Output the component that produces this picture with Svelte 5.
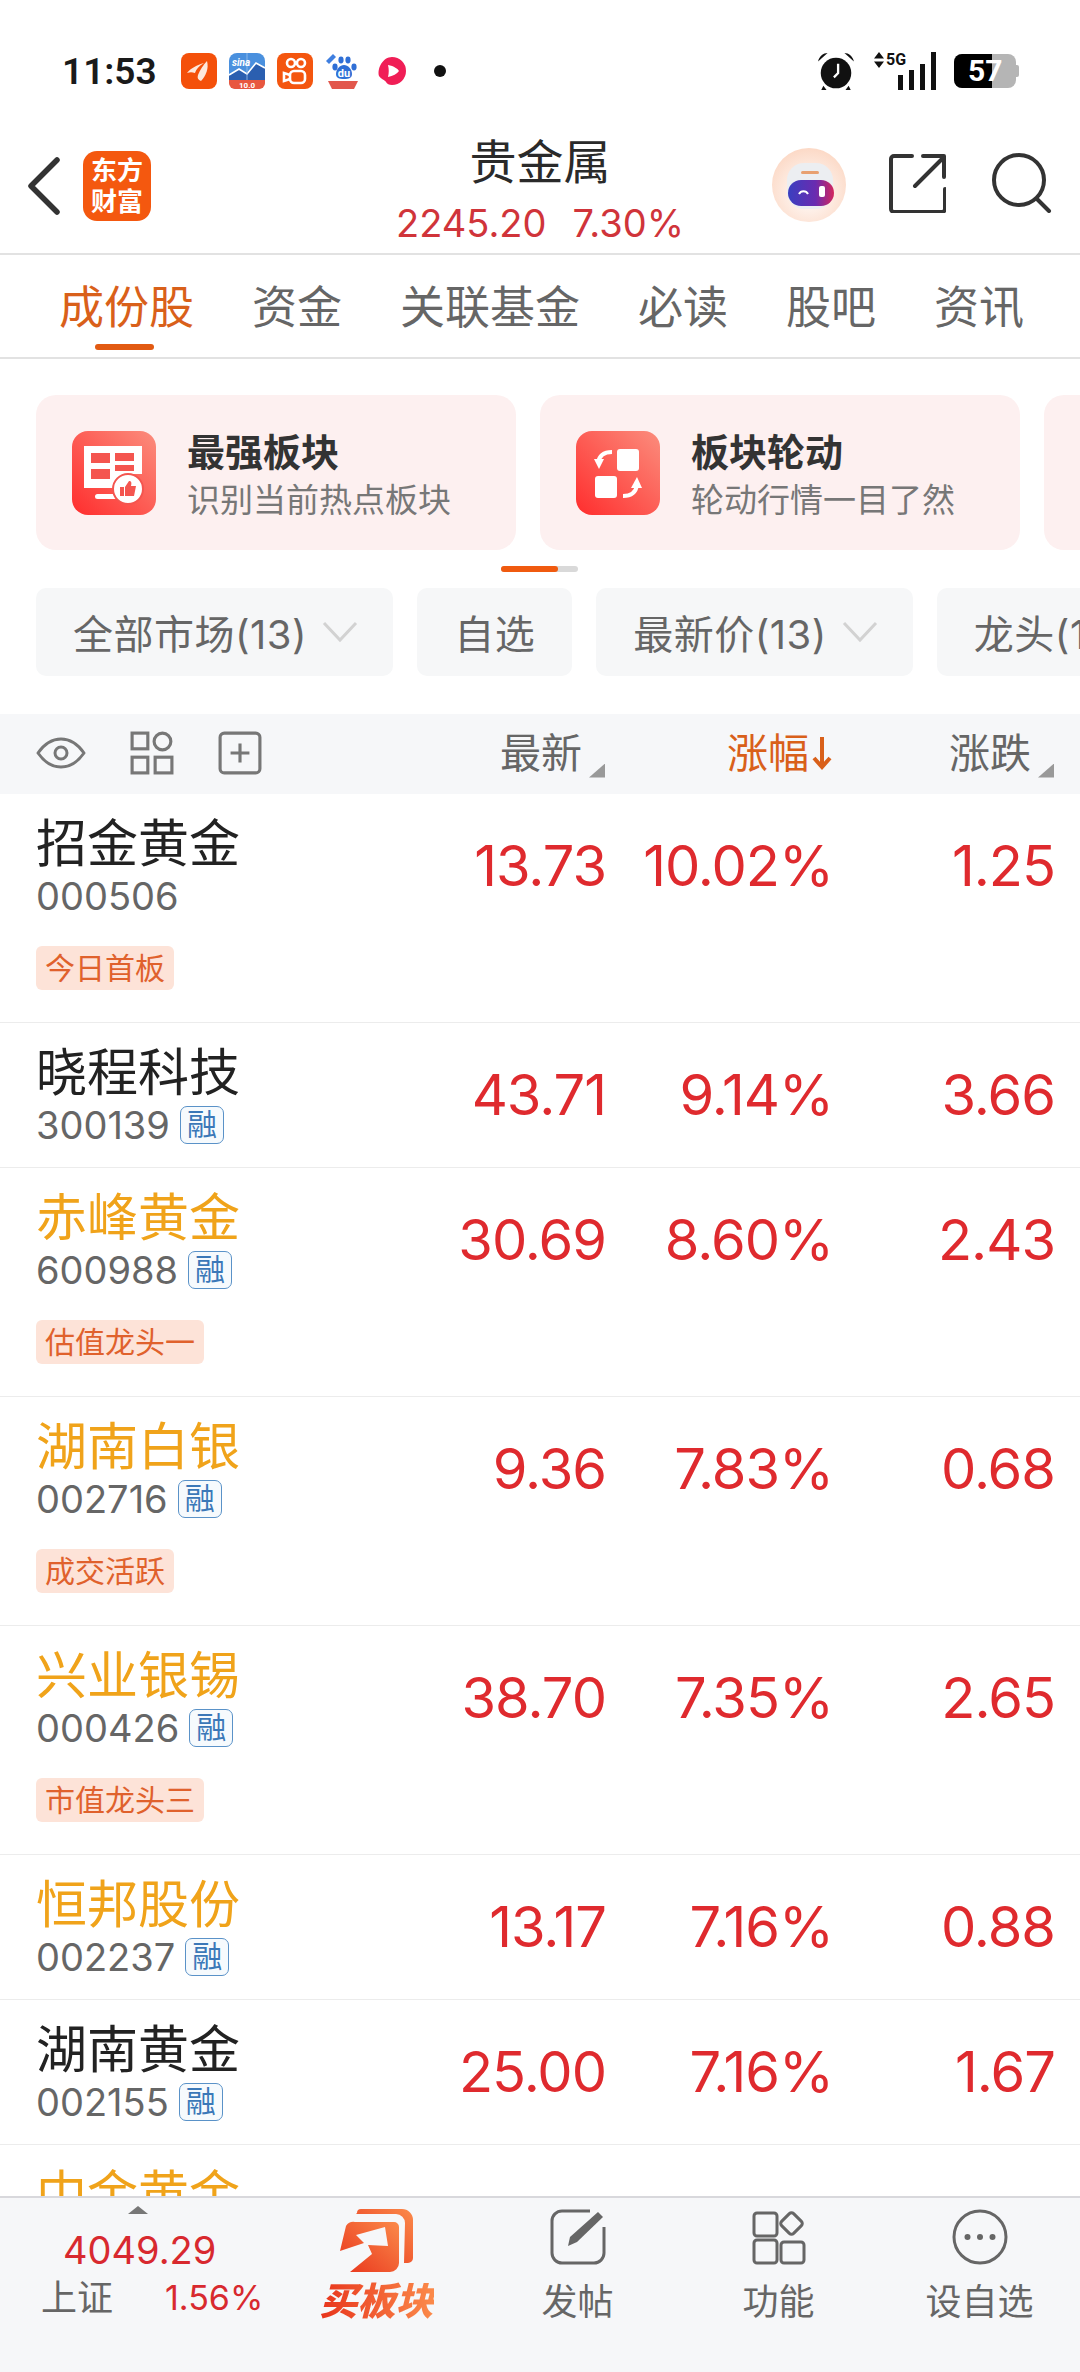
<script>
  const tabs = ['成份股', '资金', '关联基金', '必读', '股吧', '资讯'];
  const rows = [
    { name: '招金黄金', code: '000506', price: '13.73', pct: '10.02%', chg: '1.25', tag: '今日首板' },
    { name: '晓程科技', code: '300139', price: '43.71', pct: '9.14%', chg: '3.66', rong: true },
    { name: '赤峰黄金', code: '600988', price: '30.69', pct: '8.60%', chg: '2.43', rong: true, gold: true, tag: '估值龙头一' },
    { name: '湖南白银', code: '002716', price: '9.36', pct: '7.83%', chg: '0.68', rong: true, gold: true, tag: '成交活跃' },
    { name: '兴业银锡', code: '000426', price: '38.70', pct: '7.35%', chg: '2.65', rong: true, gold: true, tag: '市值龙头三' },
    { name: '恒邦股份', code: '002237', price: '13.17', pct: '7.16%', chg: '0.88', rong: true, gold: true },
    { name: '湖南黄金', code: '002155', price: '25.00', pct: '7.16%', chg: '1.67', rong: true },
    { name: '中金黄金', code: '600489', price: '', pct: '', chg: '', rong: true, gold: true }
  ];
</script>

<div class="screen">
  <div class="status">
    <span class="time">11:53</span>
    <div class="notes">
      <svg width="36" height="36" viewBox="0 0 36 36"><rect width="36" height="36" rx="8" fill="#f4500a"/><path d="M6 20c4-5 10-8 17-10-5 3-8 6-9 10-3-1-5-1-8 0z" fill="#fde8dc"/><path d="M26 8c2 7-1 15-6 20-3-1-4-3-3-6 2-5 5-10 9-14z" fill="#fde8dc"/></svg>
      <svg width="36" height="36" viewBox="0 0 36 36"><rect width="36" height="36" rx="8" fill="#4a90de"/><path d="M0 22l10-6 8 5 9-11 9 5v13H0z" fill="#2b5fb0"/><path d="M0 22l10-6 8 5 9-11 9 5" fill="none" stroke="#fff" stroke-width="1.600"/><path d="M18 0v28" stroke="#9cc2ee" stroke-width=".8"/><path d="M0 27h36v3a6 6 0 0 1-6 6H6a6 6 0 0 1-6-6z" fill="#e8573f"/><text x="3" y="13" class="mini it">sina</text><text x="18" y="35" class="mini ctr">10.0</text></svg>
      <svg width="36" height="36" viewBox="0 0 36 36"><rect width="36" height="36" rx="8" fill="#f4560f"/><g fill="none" stroke="#fff" stroke-width="2.600"><circle cx="14" cy="10" r="4"/><circle cx="24" cy="10" r="4"/><rect x="13" y="18" width="15" height="12" rx="4"/><path d="M13 22l-6-2v8l6-2"/></g></svg>
      <svg width="36" height="36" viewBox="0 0 36 36"><g fill="#2f6fd6"><ellipse cx="10" cy="14" rx="2.600" ry="3.400"/><ellipse cx="16" cy="7" rx="2.600" ry="3.400"/><ellipse cx="23" cy="7" rx="2.600" ry="3.400"/><ellipse cx="29" cy="14" rx="2.600" ry="3.400"/><path d="M19 12c4 0 8 4 8 9 0 4-3 5-8 5s-8-1-8-5c0-5 4-9 8-9z"/></g><text x="19" y="24" class="mini ctr du">du</text><path d="M3 28h30l-4 8H7z" fill="#e2574c"/><path d="M1 8l7-7 3 3-7 7z" fill="#3f7fe0"/></svg>
      <svg class="hs" width="30" height="30" viewBox="0 0 30 30"><path d="M15 1a14 14 0 1 1 0 28c-3 0-5-1-6-3-1-2-5-3-7-6C0 12 6 1 15 1z" fill="#f01e56"/><path d="M11 9c6 1 10 4 11 6-2 3-6 5-11 6 1-4 1-8 0-12z" fill="#fff"/></svg>
      <span class="dot"></span>
    </div>
    <div class="sys">
      <svg width="40" height="40" viewBox="0 0 38 38"><circle cx="19" cy="21" r="14.500" fill="#111"/><path d="M2 10c1-5 5-8 9-8z M36 10c-1-5-5-8-9-8z" fill="#111"/><path d="M7 33l-2 4h5z M31 33l2 4h-5z" fill="#111"/><path d="M21 12v9l-4 4" fill="none" stroke="#fff" stroke-width="2.200"/></svg>
      <div class="net">
        <svg class="updown" width="10" height="16" viewBox="0 0 10 16"><path d="M5 0l5 6.500H0zM5 16L0 9.500h10z" fill="#111"/></svg>
        <span class="fiveg">5G</span>
        <svg width="38" height="38" viewBox="0 0 38 38"><g fill="#111"><rect x="0" y="23" width="5" height="15"/><rect x="11" y="18" width="5" height="20"/><rect x="22" y="12" width="5" height="26"/><rect x="33" y="0" width="5" height="38"/></g></svg>
      </div>
      <div class="batt"><span class="fill"></span><span class="level">57</span><span class="cap"></span></div>
    </div>
  </div>

  <header class="head">
    <svg class="back" width="34" height="58" viewBox="0 0 34 58"><path d="M30 3L4 29l26 26" fill="none" stroke="#333" stroke-width="5.500" stroke-linecap="round" stroke-linejoin="round"/></svg>
    <div class="logo"><span>东方</span><span>财富</span></div>
    <div class="title">
      <div class="t1">贵金属</div>
      <div class="t2"><span>2245.20</span><span>7.30%</span></div>
    </div>
    <svg class="robot" width="74" height="74" viewBox="0 0 74 74">
      <defs>
        <radialGradient id="rb" cx="50%" cy="60%" r="60%"><stop offset="0" stop-color="#fff"/><stop offset="1" stop-color="#fcd9c6"/></radialGradient>
        <linearGradient id="vs" x1="0" x2="1"><stop offset="0" stop-color="#3a3fc0"/><stop offset=".6" stop-color="#6a2bb0"/><stop offset="1" stop-color="#d3265c"/></linearGradient>
      </defs>
      <circle cx="37" cy="37" r="37" fill="url(#rb)"/>
      <rect x="15" y="15" width="46" height="46" rx="17" fill="#eceef1"/>
      <rect x="29" y="23" width="18" height="3" rx="1.500" fill="#e8a070"/>
      <rect x="16" y="32" width="46" height="26" rx="13" fill="url(#vs)"/>
      <path d="M27 46a5 5 0 0 1 9 0" fill="none" stroke="#fff" stroke-width="2"/>
      <rect x="47" y="38" width="6" height="11" rx="2" fill="#fff"/>
    </svg>
    <svg class="share" width="58" height="60" viewBox="0 0 58 60"><path d="M24 3H6a3 3 0 0 0-3 3v50a3 3 0 0 0 3 3h48a3 3 0 0 0 3-3V36M27 33L56 4M35 3h21v21" fill="none" stroke="#333" stroke-width="4" stroke-linecap="round" stroke-linejoin="round"/></svg>
    <svg class="search" width="60" height="60" viewBox="0 0 60 60"><circle cx="27" cy="27" r="25" fill="none" stroke="#333" stroke-width="4"/><path d="M45 46l12 12" stroke="#333" stroke-width="4" stroke-linecap="round"/></svg>
  </header>

  <nav class="tabs">
    {#each tabs as t, i}
      <div class="tab" class:on={i === 0}>{t}{#if i === 0}<span class="bar"></span>{/if}</div>
    {/each}
  </nav>

  <div class="cards">
    <div class="card">
      <svg width="84" height="84" viewBox="0 0 84 84">
        <defs><linearGradient id="ci" x1="0" y1="1" x2="1" y2="0"><stop offset="0" stop-color="#ff2d2d"/><stop offset="1" stop-color="#fb8d7d"/></linearGradient></defs>
        <rect width="84" height="84" rx="16" fill="url(#ci)"/>
        <path d="M12 15h58v28H53v14H12z" fill="#fff"/>
        <rect x="19" y="22" width="19" height="10" fill="#f4554f"/><rect x="19" y="38" width="19" height="10" fill="#f4554f"/><rect x="43" y="22" width="19" height="8" fill="#f4554f"/><rect x="43" y="34" width="19" height="6" fill="#f4554f"/>
        <rect x="23" y="63" width="22" height="5" rx="2.500" fill="#fff"/>
        <circle cx="56" cy="58" r="15" fill="#fff" stroke="#f4554f" stroke-width="2"/>
        <path d="M48 56h4v9h-4zM53 56l4-6c2 0 3 1 2 5h5l-2 10h-9z" fill="#f4554f"/>
      </svg>
      <div class="ctext"><div class="ct">最强板块</div><div class="cs">识别当前热点板块</div></div>
    </div>
    <div class="card">
      <svg width="84" height="84" viewBox="0 0 84 84">
        <rect width="84" height="84" rx="16" fill="url(#ci)"/>
        <rect x="41" y="18" width="22" height="22" rx="3" fill="#fff"/>
        <rect x="19" y="45" width="22" height="22" rx="3" fill="#fff"/>
        <path d="M36 21c-8 0-13 4-14 11" fill="none" stroke="#fff" stroke-width="4"/><path d="M18 28h10l-5 10z" fill="#fff"/>
        <path d="M47 65c8 0 13-4 14-11" fill="none" stroke="#fff" stroke-width="4"/><path d="M66 57H55l6-11z" fill="#fff"/>
      </svg>
      <div class="ctext"><div class="ct">板块轮动</div><div class="cs">轮动行情一目了然</div></div>
    </div>
    <div class="card"></div>
  </div>

  <div class="indicator"><span></span></div>

  <div class="pills">
    <div class="pill">全部市场(13)<svg width="36" height="22" viewBox="0 0 36 22"><path d="M2 2l16 17L34 2" fill="none" stroke="#d2d2d2" stroke-width="3"/></svg></div>
    <div class="pill">自选</div>
    <div class="pill">最新价(13)<svg width="36" height="22" viewBox="0 0 36 22"><path d="M2 2l16 17L34 2" fill="none" stroke="#d2d2d2" stroke-width="3"/></svg></div>
    <div class="pill">龙头(13)</div>
  </div>

  <div class="thead">
    <div class="ticons">
      <svg width="50" height="32" viewBox="0 0 50 32"><path d="M2 16C9 6 16 2 25 2s16 4 23 14c-7 10-14 14-23 14S9 26 2 16z" fill="none" stroke="#777" stroke-width="3" stroke-linejoin="round"/><circle cx="25" cy="16" r="6" fill="none" stroke="#777" stroke-width="3"/></svg>
      <svg width="44" height="44" viewBox="0 0 42 42"><g fill="none" stroke="#777" stroke-width="3"><rect x="2" y="2" width="15" height="15"/><circle cx="31" cy="10" r="8"/><rect x="2" y="25" width="15" height="15"/><rect x="24" y="25" width="16" height="15"/></g></svg>
      <svg width="44" height="44" viewBox="0 0 42 42"><rect x="2" y="2" width="38" height="38" rx="4" fill="none" stroke="#777" stroke-width="3"/><path d="M21 12v18M12 21h18" stroke="#777" stroke-width="3"/></svg>
    </div>
    <div class="th">最新<i class="tri"></i></div>
    <div class="th act">涨幅<svg width="20" height="34" viewBox="0 0 20 34"><path d="M10 1v30M2 22l8 9 8-9" fill="none" stroke="#d9601a" stroke-width="4"/></svg></div>
    <div class="th">涨跌<i class="tri"></i></div>
  </div>

  <main class="list">
    {#each rows as r}
      <div class="row">
        <div class="main">
          <div class="info">
            <div class="name" class:gold={r.gold}>{r.name}</div>
            <div class="code">{r.code}{#if r.rong}<span class="rong">融</span>{/if}</div>
          </div>
          <div class="num">{r.price}</div>
          <div class="num pct">{r.pct}</div>
          <div class="num">{r.chg}</div>
        </div>
        {#if r.tag}<div class="tagline"><span class="tag">{r.tag}</span></div>{/if}
      </div>
    {/each}
  </main>

  <footer class="foot">
    <div class="index">
      <i class="up"></i>
      <div class="ival">4049.29</div>
      <div class="irow"><span class="iname">上证</span><span class="ipct">1.56%</span></div>
    </div>
    <div class="ft buycell">
      <svg width="74" height="64" viewBox="0 0 74 64">
        <defs>
          <linearGradient id="bg1" x1="0" y1="1" x2="1" y2="0"><stop offset="0" stop-color="#e8341c"/><stop offset="1" stop-color="#fb8a4a"/></linearGradient>
        </defs>
        <path d="M17 4a4 4 0 0 1 4-4h41a11 11 0 0 1 11 11v38a5 5 0 0 1-5 5h-4l1-40a9 9 0 0 0-9-9H16z" fill="url(#bg1)"/>
        <path d="M6 17a9 9 0 0 1 9-4h39a5 5 0 0 1 5 5v36a9 9 0 0 1-9 9H10l22-18-4-9 20 1-3-19-29 8 8 8-24 8z" fill="url(#bg1)"/>
      </svg>
      <span class="buy">买板块</span>
    </div>
    <div class="ft">
      <svg width="56" height="56" viewBox="0 0 56 56"><path d="M40 2H12A10 10 0 0 0 2 12v32a10 10 0 0 0 10 10h32a10 10 0 0 0 10-10V18" fill="none" stroke="#666" stroke-width="3"/><path d="M18 37l2-9L48 3l5 5-26 25z" fill="#666"/></svg>
      <span class="fl">发帖</span>
    </div>
    <div class="ft">
      <svg width="54" height="56" viewBox="0 0 54 56"><g fill="none" stroke="#666" stroke-width="3"><rect x="2" y="4" width="23" height="23" rx="3"/><rect x="29" y="33" width="23" height="21" rx="3"/><rect x="2" y="31" width="23" height="23" rx="3"/><rect x="31" y="6" width="17" height="17" rx="3" transform="rotate(45 39.500 14.500)"/></g></svg>
      <span class="fl">功能</span>
    </div>
    <div class="ft">
      <svg width="56" height="56" viewBox="0 0 56 56"><circle cx="28" cy="28" r="26" fill="none" stroke="#666" stroke-width="3"/><g fill="#666"><circle cx="15.500" cy="28" r="3"/><circle cx="28" cy="28" r="3"/><circle cx="40.500" cy="28" r="3"/></g></svg>
      <span class="fl">设自选</span>
    </div>
  </footer>
</div>

<style>
  :global(body) { margin: 0; background: #fff; }
  .screen {
    width: 1080px; height: 2372px; display: flex; flex-direction: column; overflow: hidden;
    font-family: "Inter", "Noto Sans CJK SC", sans-serif; background: #fff; color: #222;
  }
  .status { height: 98px; padding: 22px 64px 0 62px; display: flex; align-items: center; flex: none; }
  .time { font-size: 37px; font-weight: 600; color: #1a1a1a; width: 119px; font-family: "Roboto", sans-serif; }
  .notes { display: flex; align-items: center; gap: 12px; flex: 1; }
  .hs { margin-left: 4px; }
  .mini { font: 700 8px "Roboto", sans-serif; fill: #fff; }
  .it { font-style: italic; font-size: 10px; }
  .ctr { text-anchor: middle; }
  .du { font-size: 11px; }
  .dot { width: 12px; height: 12px; border-radius: 50%; background: #111; margin-left: 15px; }
  .sys { display: flex; align-items: center; }
  .net { position: relative; width: 62px; height: 38px; margin-left: 18px; margin-right: 18px; display: flex; justify-content: flex-end; }
  .updown { position: absolute; left: 0; top: 0; }
  .fiveg { position: absolute; left: 12px; top: -2px; font: 700 16px/20px "Roboto", sans-serif; color: #111; }
  .batt { position: relative; width: 62px; height: 34px; background: #b5b5b5; border-radius: 8px; }
  .fill { position: absolute; left: 0; top: 0; bottom: 0; width: 38px; background: #000; border-radius: 8px 0 0 8px; }
  .level { position: absolute; left: 14px; top: 0; font: 700 30px/34px "Roboto", sans-serif; color: #fff; }
  .cap { position: absolute; right: -3px; top: 11px; width: 3px; height: 12px; background: #b5b5b5; border-radius: 0 2px 2px 0; }

  .head { height: 133px; flex: none; display: flex; align-items: center; padding-left: 27px; border-bottom: 2px solid #e2e2e2; }
  .back { flex: none; margin-top: -2px; }
  .logo { flex: none; width: 68px; height: 70px; margin-left: 22px; margin-top: -2px; background: #f4580f; border-radius: 14px; color: #fff; font-size: 26px; font-weight: 700; line-height: 31px; display: flex; flex-direction: column; align-items: center; justify-content: center; }
  .title { flex: none; width: 400px; margin: 6px 32px 0 189px; text-align: center; }
  .t1 { font-size: 47px; line-height: 60px; color: #2a2a2a; }
  .t2 { font-size: 38px; line-height: 50px; margin-top: 6px; color: #d0343a; display: flex; gap: 26px; justify-content: center; }
  .robot { flex: none; margin-top: -4px; }
  .share { flex: none; margin-left: 42px; margin-top: -8px; }
  .search { flex: none; margin-left: 46px; margin-top: -8px; }

  .tabs { height: 102px; flex: none; display: flex; gap: 58px; padding-left: 59px; border-bottom: 2px solid #e2e2e2; align-items: center; }
  .tab { font-size: 45px; color: #666; position: relative; line-height: 60px; margin-top: 3px; }
  .tab.on { color: #d9601a; }
  .bar { position: absolute; left: 36px; bottom: -12px; width: 59px; height: 6px; border-radius: 3px; background: #e25a12; }

  .cards { margin-top: 36px; display: flex; gap: 24px; padding-left: 36px; flex: none; }
  .card { width: 480px; height: 155px; flex: none; border-radius: 20px; background: #fdf0f0; display: flex; align-items: center; padding-left: 36px; box-sizing: border-box; gap: 31px; }
  .ctext { margin-top: 3px; }
  .ct { font-size: 38px; font-weight: 700; line-height: 50px; color: #333; }
  .cs { font-size: 33px; line-height: 44px; color: #777; margin-top: 1px; }
  .indicator { margin: 16px 0 0 501px; width: 77px; height: 6px; background: #d9d9d9; border-radius: 3px; flex: none; }
  .indicator span { display: block; width: 57px; height: 6px; background: #f05a0f; border-radius: 3px; }

  .pills { margin-top: 16px; display: flex; gap: 24px; padding-left: 36px; flex: none; }
  .pill { height: 88px; flex: none; display: flex; align-items: center; gap: 15px; padding: 0 37px; background: #f6f7f8; border-radius: 10px; font-size: 40px; color: #666; letter-spacing: 0.5px; }
  .pill svg { margin-right: -2px; }

  .thead { margin-top: 38px; height: 80px; flex: none; background: #f6f7f9; display: grid; grid-template-columns: 300px 269px 224px 225px; padding: 0 26px 0 36px; align-items: center; }
  .ticons { display: flex; align-items: center; gap: 44px; margin-top: -2px; }
  .th { font-size: 41px; color: #666; display: flex; justify-content: flex-end; align-items: center; gap: 7px; line-height: 56px; margin-top: -3px; }
  .th.act { color: #d9601a; gap: 3px; margin-right: -3px; }
  .tri { width: 16px; height: 14px; background: #999; clip-path: polygon(100% 0, 100% 100%, 0 100%); align-self: flex-end; margin-bottom: 3px; }

  .list { flex: 1; min-height: 0; overflow: hidden; }
  .row { border-bottom: 1px solid #ececec; padding: 0 26px 0 36px; }
  .main { height: 144px; display: grid; grid-template-columns: 300px 269px 224px 225px; align-items: center; }
  .info { padding-top: 6px; }
  .name { font-size: 51px; line-height: 54px; color: #222; }
  .name.gold { color: #f0a31a; }
  .code { font-size: 38px; line-height: 50px; color: #666; display: flex; align-items: center; gap: 10px; }
  .rong { width: 44px; height: 38px; box-sizing: border-box; border: 1.5px solid #5a92c8; border-radius: 7px; background: #f6fafd; color: #3b78b8; font-size: 30px; line-height: 34px; text-align: center; }
  .num { text-align: right; font-size: 56px; letter-spacing: -1px; color: #df2a2e; margin-right: -1px; }
  .num.pct { margin-right: -4px; }
  .tagline { height: 84px; padding-top: 8px; box-sizing: border-box; }
  .tag { display: inline-block; height: 44px; line-height: 44px; padding: 0 9px; border-radius: 6px; background: #fde3d8; color: #e0612c; font-size: 30px; }

  .foot { height: 176px; flex: none; box-sizing: border-box; border-top: 2px solid #d8d8dc; background: #f6f7f9; display: grid; grid-template-columns: 276px repeat(4, 201px); }
  .index { position: relative; padding: 28px 0 0 41px; }
  .up { position: absolute; left: 128px; top: 8px; width: 20px; height: 8px; background: #777; clip-path: polygon(50% 0, 100% 100%, 0 100%); }
  .ival { font-size: 38px; line-height: 48px; color: #d8292f; margin-left: 22px; }
  .irow { display: flex; align-items: center; gap: 52px; line-height: 48px; }
  .iname { font-size: 36px; color: #666; }
  .ipct { font-size: 34px; color: #d8292f; }
  .ft { display: flex; flex-direction: column; align-items: center; padding-top: 11px; gap: 14px; }
  .buycell { gap: 6px; }
  .buy { font-size: 38px; font-weight: 900; font-style: italic; line-height: 44px; background: linear-gradient(90deg, #e8341c, #fb8a4a); -webkit-background-clip: text; background-clip: text; color: transparent; }
  .fl { font-size: 36px; line-height: 46px; color: #666; }
</style>
